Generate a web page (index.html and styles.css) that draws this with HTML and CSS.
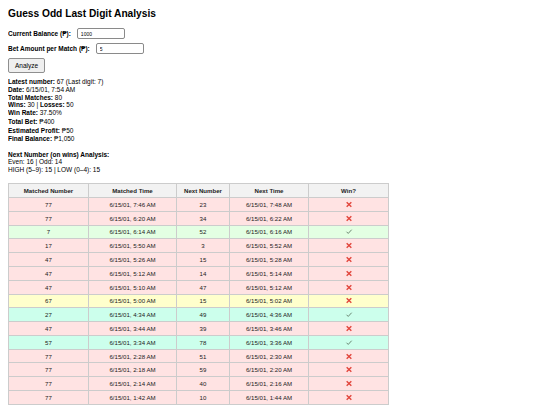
FILE: index.html
```html
<!DOCTYPE html>
<html>
<head>
<meta charset="utf-8">
<title>Guess Odd Last Digit Analysis</title>
<link rel="stylesheet" href="styles.css">
</head>
<body>
<h2 class="title">Guess Odd Last Digit Analysis</h2>
<div class="form-row">
  <label class="label">Current Balance (₱):</label>
  <input class="field" type="text" value="1000">
</div>
<div class="form-row">
  <label class="label">Bet Amount per Match (₱):</label>
  <input class="field" type="text" value="5">
</div>
<button class="btn">Analyze</button>

<div class="results">
  <div class="line"><b>Latest number:</b> 67 (Last digit: 7)</div>
  <div class="line"><b>Date:</b> 6/15/01, 7:54 AM</div>
  <div class="line"><b>Total Matches:</b> 80</div>
  <div class="line"><b>Wins:</b> 30 | <b>Losses:</b> 50</div>
  <div class="line"><b>Win Rate:</b> 37.50%</div>
  <div class="line gap"><b>Total Bet:</b> ₱400</div>
  <div class="line gap"><b>Estimated Profit:</b> ₱50</div>
  <div class="line gap"><b>Final Balance:</b> ₱1,050</div>
</div>

<div class="analysis">
  <div class="line"><b>Next Number (on wins) Analysis:</b></div>
  <div class="line">Even: 16 | Odd: 14</div>
  <div class="line">HIGH (5–9): 15 | LOW (0–4): 15</div>
</div>

<table class="matches">
  <colgroup>
    <col class="c1"><col class="c2"><col class="c3"><col class="c4"><col class="c5">
  </colgroup>
  <thead>
    <tr><th>Matched Number</th><th>Matched Time</th><th>Next Number</th><th>Next Time</th><th>Win?</th></tr>
  </thead>
  <tbody>
    <tr class="loss"><td>77</td><td>6/15/01, 7:46 AM</td><td>23</td><td>6/15/01, 7:48 AM</td><td><svg class="ico" viewBox="0 0 10 9"><path class="x" d="M2 1.5L8 7.5M8 1.5L2 7.5"/></svg></td></tr>
    <tr class="loss"><td>77</td><td>6/15/01, 6:20 AM</td><td>34</td><td>6/15/01, 6:22 AM</td><td><svg class="ico" viewBox="0 0 10 9"><path class="x" d="M2 1.5L8 7.5M8 1.5L2 7.5"/></svg></td></tr>
    <tr class="win"><td>7</td><td>6/15/01, 6:14 AM</td><td>52</td><td>6/15/01, 6:16 AM</td><td><svg class="ico" viewBox="0 0 10 9"><path class="ck" d="M1.8 4.8L4 7L8.4 2.2"/></svg></td></tr>
    <tr class="loss"><td>17</td><td>6/15/01, 5:50 AM</td><td>3</td><td>6/15/01, 5:52 AM</td><td><svg class="ico" viewBox="0 0 10 9"><path class="x" d="M2 1.5L8 7.5M8 1.5L2 7.5"/></svg></td></tr>
    <tr class="loss"><td>47</td><td>6/15/01, 5:26 AM</td><td>15</td><td>6/15/01, 5:28 AM</td><td><svg class="ico" viewBox="0 0 10 9"><path class="x" d="M2 1.5L8 7.5M8 1.5L2 7.5"/></svg></td></tr>
    <tr class="loss"><td>47</td><td>6/15/01, 5:12 AM</td><td>14</td><td>6/15/01, 5:14 AM</td><td><svg class="ico" viewBox="0 0 10 9"><path class="x" d="M2 1.5L8 7.5M8 1.5L2 7.5"/></svg></td></tr>
    <tr class="loss"><td>47</td><td>6/15/01, 5:10 AM</td><td>47</td><td>6/15/01, 5:12 AM</td><td><svg class="ico" viewBox="0 0 10 9"><path class="x" d="M2 1.5L8 7.5M8 1.5L2 7.5"/></svg></td></tr>
    <tr class="warn"><td>67</td><td>6/15/01, 5:00 AM</td><td>15</td><td>6/15/01, 5:02 AM</td><td><svg class="ico" viewBox="0 0 10 9"><path class="x" d="M2 1.5L8 7.5M8 1.5L2 7.5"/></svg></td></tr>
    <tr class="mint"><td>27</td><td>6/15/01, 4:34 AM</td><td>49</td><td>6/15/01, 4:36 AM</td><td><svg class="ico" viewBox="0 0 10 9"><path class="ck" d="M1.8 4.8L4 7L8.4 2.2"/></svg></td></tr>
    <tr class="loss"><td>47</td><td>6/15/01, 3:44 AM</td><td>39</td><td>6/15/01, 3:46 AM</td><td><svg class="ico" viewBox="0 0 10 9"><path class="x" d="M2 1.5L8 7.5M8 1.5L2 7.5"/></svg></td></tr>
    <tr class="mint"><td>57</td><td>6/15/01, 3:34 AM</td><td>78</td><td>6/15/01, 3:36 AM</td><td><svg class="ico" viewBox="0 0 10 9"><path class="ck" d="M1.8 4.8L4 7L8.4 2.2"/></svg></td></tr>
    <tr class="loss"><td>77</td><td>6/15/01, 2:28 AM</td><td>51</td><td>6/15/01, 2:30 AM</td><td><svg class="ico" viewBox="0 0 10 9"><path class="x" d="M2 1.5L8 7.5M8 1.5L2 7.5"/></svg></td></tr>
    <tr class="loss"><td>77</td><td>6/15/01, 2:18 AM</td><td>59</td><td>6/15/01, 2:20 AM</td><td><svg class="ico" viewBox="0 0 10 9"><path class="x" d="M2 1.5L8 7.5M8 1.5L2 7.5"/></svg></td></tr>
    <tr class="loss"><td>77</td><td>6/15/01, 2:14 AM</td><td>40</td><td>6/15/01, 2:16 AM</td><td><svg class="ico" viewBox="0 0 10 9"><path class="x" d="M2 1.5L8 7.5M8 1.5L2 7.5"/></svg></td></tr>
    <tr class="loss"><td>77</td><td>6/15/01, 1:42 AM</td><td>10</td><td>6/15/01, 1:44 AM</td><td><svg class="ico" viewBox="0 0 10 9"><path class="x" d="M2 1.5L8 7.5M8 1.5L2 7.5"/></svg></td></tr>
  </tbody>
</table>
</body>
</html>
```
FILE: styles.css
```css
html, body {
  background: #ffffff;
}
body {
  margin: 8px;
  font-family: "Liberation Sans", Arial, sans-serif;
  font-size: 6.5px;
  color: #000;
}
.title {
  margin: 0 0 8px;
  font-size: 10.2px;
  line-height: 12px;
  font-weight: bold;
  color: #000;
}
.form-row {
  display: flex;
  align-items: center;
  gap: 6px;
  margin-bottom: 4px;
  height: 11px;
}
.label {
  font-weight: bold;
}
.field {
  width: 48px;
  height: 11px;
  box-sizing: border-box;
  border: 1px solid #8a8a8a;
  border-radius: 2px;
  padding: 0 3px;
  font-family: "Liberation Sans", Arial, sans-serif;
  font-size: 5px;
  color: #000;
  background: #fff;
}
.btn {
  display: block;
  margin-top: 4px;
  width: 37px;
  height: 15px;
  padding: 0;
  border: 1px solid #8f8f8f;
  border-radius: 2px;
  background: #efefef;
  font-family: "Liberation Sans", Arial, sans-serif;
  font-size: 6.5px;
  color: #000;
}
.results {
  margin-top: 5px;
}
.line {
  line-height: 7.75px;
}
.line.gap {
  margin-top: 1px;
}
.analysis {
  margin-top: 7.5px;
}
.matches {
  margin-top: 9.5px;
  border-collapse: collapse;
  table-layout: fixed;
  width: 380px;
  font-size: 6.1px;
  color: #222;
}
.c1 { width: 80px; }
.c2 { width: 88px; }
.c3 { width: 53px; }
.c4 { width: 79px; }
.c5 { width: 80px; }
.matches th,
.matches td {
  border: 1px solid #cccccc;
  text-align: center;
  padding: 2.9px 2px;
  line-height: 7px;
  height: 7px;
  white-space: nowrap;
}
.matches th {
  background: #f2f2f2;
  font-weight: bold;
}
.loss td { background: #ffe3e3; }
.win td { background: #e3ffe3; }
.warn td { background: #ffffcc; }
.mint td { background: #ccffec; }
.ico {
  display: block;
  margin: 0 auto;
  width: 8px;
  height: 7px;
}
.x {
  stroke: #e2463c;
  stroke-width: 1.8;
  fill: none;
}
.ck {
  stroke: #5b7560;
  stroke-width: 1.1;
  fill: none;
}
```
